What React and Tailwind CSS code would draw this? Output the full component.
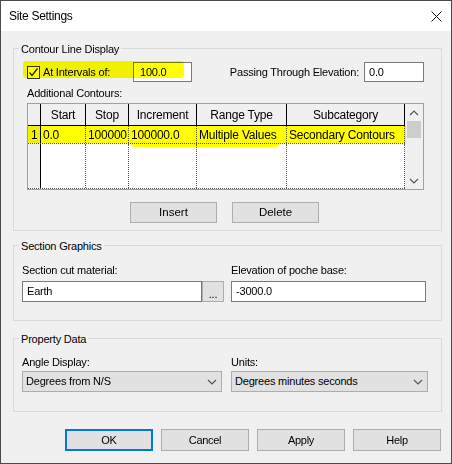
import React from "react";

const uiFont = "font-['Liberation_Sans',Arial,sans-serif]";

const GroupBox = ({ title, className, children }) => {
  return (
    <div className={`relative ml-[12px] w-[429px] border border-[#d9d9d9] ${className}`}>
      <span className="absolute left-[5px] top-[-7px] bg-[#f0f0f0] px-[2px] leading-[14px]">
        {title}
      </span>
      {children}
    </div>
  );
};

const TextBox = ({ value, className }) => {
  return (
    <div
      className={`flex items-center border border-[#7a7a7a] bg-white pl-[4px] text-black ${className}`}
    >
      {value}
    </div>
  );
};

const Chevron = ({ up }) => {
  return (
    <svg width="10" height="6" viewBox="0 0 10 6" className="block">
      <polyline
        points={up ? "1,5 5,1 9,5" : "1,1 5,5 9,1"}
        fill="none"
        stroke="#555"
        strokeWidth="1.2"
      />
    </svg>
  );
};

const SelectBox = ({ value, className }) => {
  return (
    <div
      className={`flex items-center justify-between border border-[#adadad] bg-[#e1e1e1] pl-[3px] pr-[4px] ${className}`}
    >
      <span>{value}</span>
      <Chevron />
    </div>
  );
};

const columns = [
  { key: "start", label: "Start", width: "w-[45px]", value: "0.0" },
  { key: "stop", label: "Stop", width: "w-[43px]", value: "100000" },
  { key: "inc", label: "Increment", width: "w-[68px]", value: "100000.0" },
  { key: "range", label: "Range Type", width: "w-[90px]", value: "Multiple Values" },
  { key: "sub", label: "Subcategory", width: "w-[118px]", value: "Secondary Contours" },
];

const ContourTable = () => {
  return (
    <div className="mt-[3px] flex h-[87px] w-[397px] border border-[#a0a0a0] bg-white text-[12px]">
      <div className="flex w-[377px] flex-col">
        <div className="flex h-[22px] border-b border-black bg-[#f0f0f0]">
          <div className="w-[13px] border-r border-black" />
          {columns.map((col) => (
            <div
              key={col.key}
              className={`flex items-center justify-center border-r border-black ${col.width}`}
            >
              {col.label}
            </div>
          ))}
        </div>

        <div className="flex h-[18px] border-b border-dotted border-[#555]">
          <div className="flex w-[13px] items-center border-r border-black bg-[#f0f0f0] pl-[3px]">
            1
          </div>
          {columns.map((col) => (
            <div
              key={col.key}
              className={`flex items-center overflow-hidden whitespace-nowrap border-r border-dotted border-[#555] pl-[2px] ${col.width}`}
            >
              {col.value}
            </div>
          ))}
        </div>

        <div className="flex flex-1 border-b border-dotted border-[#555]">
          <div className="w-[13px] border-r border-black bg-[#f0f0f0]" />
          {columns.map((col) => (
            <div
              key={col.key}
              className={`border-r border-dotted border-[#555] ${col.width}`}
            />
          ))}
        </div>
      </div>

      <div className="flex w-[18px] flex-col bg-[#f0f0f0]">
        <div className="flex h-[17px] items-center justify-center">
          <Chevron up />
        </div>
        <div className="mx-[2px] h-[17px] bg-[#cdcdcd]" />
        <div className="flex-1" />
        <div className="flex h-[17px] items-center justify-center">
          <Chevron />
        </div>
      </div>
    </div>
  );
};

const App = () => {
  return (
    <div
      className={`h-[464px] w-[452px] overflow-hidden border border-[#4b4b4b] bg-[#f0f0f0] text-[11px] tracking-[-0.2px] text-black ${uiFont}`}
    >
      <div className="flex h-[30px] items-center justify-between bg-white pl-[8px] pr-[9px]">
        <span className="text-[12px] tracking-[-0.3px]">Site Settings</span>
        <svg width="11" height="11" viewBox="0 0 11 11">
          <path d="M0.5 0.5 L10.5 10.5 M10.5 0.5 L0.5 10.5" stroke="#111" strokeWidth="1" />
        </svg>
      </div>

      <GroupBox title="Contour Line Display" className="mt-[17px] h-[183px]">
        <div className="pl-[13px]">
          <div className="mt-[13px] flex h-[20px] w-[397px] items-center">
            <div className="flex w-[106px] items-center">
              <div className="flex h-[13px] w-[13px] items-center justify-center border border-[#333] bg-white">
                <svg width="11" height="11" viewBox="0 0 11 11">
                  <polyline
                    points="1.5,5.5 4,8.5 9.5,1.5"
                    fill="none"
                    stroke="#222"
                    strokeWidth="1.3"
                  />
                </svg>
              </div>
              <span className="ml-[3px]">At Intervals of:</span>
            </div>
            <TextBox value="100.0" className="h-[20px] w-[59px] pl-[6px]" />
            <span className="flex-1 pr-[5px] text-right">Passing Through Elevation:</span>
            <TextBox value="0.0" className="h-[20px] w-[60px]" />
          </div>

          <div className="mt-[4px] leading-[14px]">Additional Contours:</div>

          <ContourTable />

          <div className="mt-[12px] flex gap-[15px] pl-[103px] text-[11.5px] tracking-normal">
            <button
              type="button"
              className="h-[21px] w-[87px] border border-[#adadad] bg-[#e1e1e1]"
            >
              Insert
            </button>
            <button
              type="button"
              className="h-[21px] w-[87px] border border-[#adadad] bg-[#e1e1e1]"
            >
              Delete
            </button>
          </div>
        </div>

        <div className="pointer-events-none absolute left-[9px] top-[12px] h-[17px] w-[161px] rounded-[3px] bg-[#ffff00] mix-blend-multiply" />
        <div className="pointer-events-none absolute left-[14px] top-[76px] h-[18px] w-[378px] rounded-[2px] bg-[#ffff00] mix-blend-multiply" />
        <div className="pointer-events-none absolute left-[116px] top-[88px] h-[10px] w-[150px] rounded-full bg-[#ffff00] mix-blend-multiply" />
      </GroupBox>

      <GroupBox title="Section Graphics" className="mt-[14px] h-[76px]">
        <div className="pl-[8px]">
          <div className="mt-[17px] flex leading-[14px]">
            <span className="w-[209px]">Section cut material:</span>
            <span>Elevation of poche base:</span>
          </div>
          <div className="mt-[4px] flex h-[21px]">
            <TextBox value="Earth" className="w-[180px]" />
            <button
              type="button"
              className="flex w-[22px] items-end justify-center border border-[#adadad] bg-[#e1e1e1] pb-[2px] leading-[10px]"
            >
              ...
            </button>
            <TextBox value="-3000.0" className="ml-[7px] w-[195px]" />
          </div>
        </div>
      </GroupBox>

      <GroupBox title="Property Data" className="mt-[17px] h-[74px]">
        <div className="pl-[8px]">
          <div className="mt-[16px] flex leading-[14px]">
            <span className="w-[209px]">Angle Display:</span>
            <span>Units:</span>
          </div>
          <div className="mt-[2px] flex h-[21px]">
            <SelectBox value="Degrees from N/S" className="w-[200px]" />
            <SelectBox value="Degrees minutes seconds" className="ml-[9px] w-[197px]" />
          </div>
        </div>
      </GroupBox>

      <div className="mt-[17px] flex justify-end gap-[8px] pr-[10px] tracking-[-0.3px]">
        <button
          type="button"
          className="h-[22px] w-[88px] border-2 border-[#0078d7] bg-[#e1e1e1]"
        >
          OK
        </button>
        {["Cancel", "Apply", "Help"].map((label) => (
          <button
            key={label}
            type="button"
            className="h-[22px] w-[88px] border border-[#adadad] bg-[#e1e1e1]"
          >
            {label}
          </button>
        ))}
      </div>
    </div>
  );
};

export default App;
